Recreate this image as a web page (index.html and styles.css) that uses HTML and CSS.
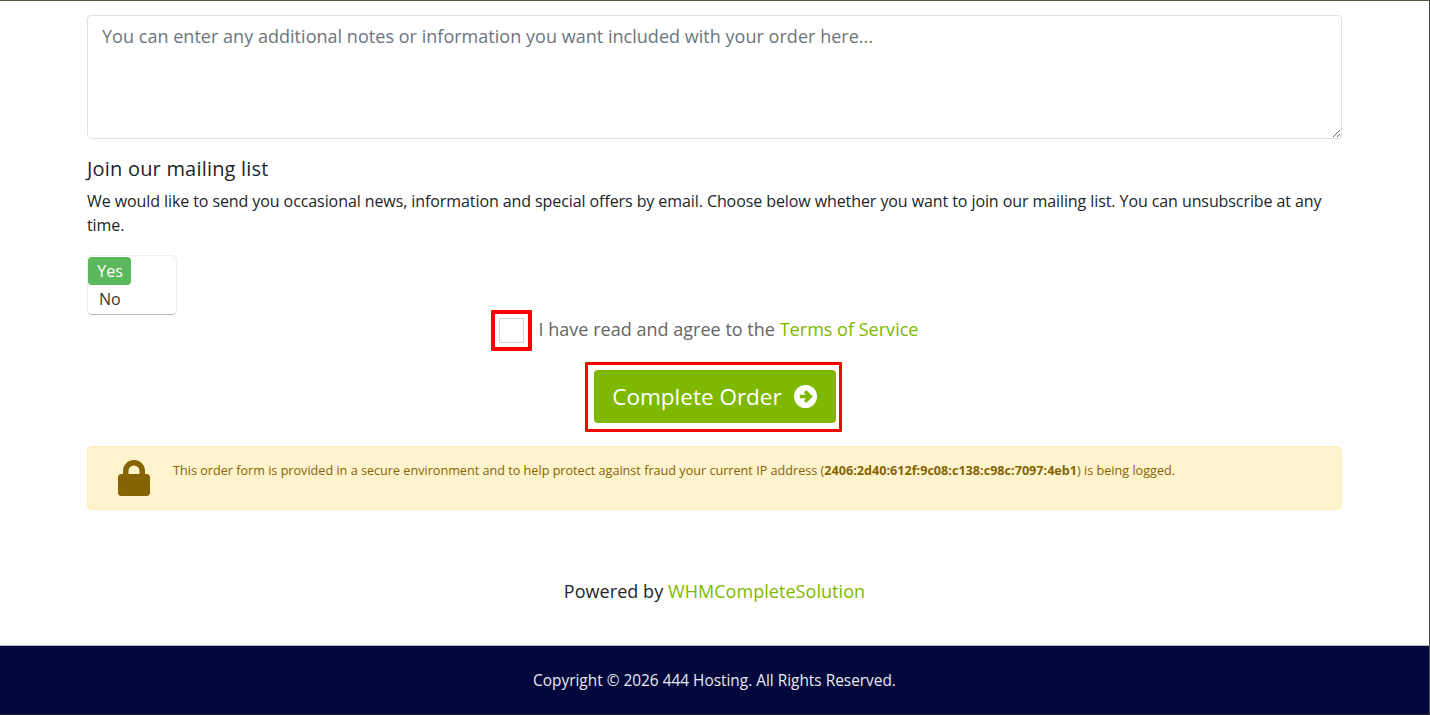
FILE: index.html
```html
<!DOCTYPE html>
<html lang="en">
<head>
    <meta charset="UTF-8">
    <meta name="viewport" content="width=device-width, initial-scale=1.0">
    <title>Checkout</title>
    <link rel="stylesheet" href="styles.css">
</head>
<body>
    <div class="frame">
        <main class="container">
            <textarea class="notes" placeholder="You can enter any additional notes or information you want included with your order here..."></textarea>

            <h3 class="list-title">Join our mailing list</h3>
            <p class="list-text">We would like to send you occasional news, information and special offers by email. Choose below whether you want to join our mailing list. You can unsubscribe at any time.</p>

            <div class="toggle">
                <span class="toggle-yes">Yes</span>
                <span class="toggle-no">No</span>
            </div>

            <div class="terms">
                <span class="highlight check-wrap"><span class="check"></span></span>
                <span class="terms-text">I have read and agree to the <a href="#">Terms of Service</a></span>
            </div>

            <div class="submit-row">
                <span class="highlight button-wrap">
                    <button class="complete" type="button">
                        <span class="complete-label">Complete Order</span>
                        <svg class="arrow" viewBox="0 0 24 24" width="23" height="23">
                            <circle cx="12" cy="12" r="12" fill="#fff"/>
                            <path d="M6 12h10.5M11.5 6.5l5.5 5.5-5.5 5.5" fill="none" stroke="#7fb800" stroke-width="3.6"/>
                        </svg>
                    </button>
                </span>
            </div>

            <div class="notice">
                <svg class="lock" viewBox="0 0 32 36" width="32" height="36">
                    <path d="M5 15V11a11 11 0 0 1 22 0v4h-5.500V11a5.500 5.500 0 0 0-11 0v4z" fill="#856404"/>
                    <rect x="0" y="14" width="32" height="22" rx="3.500" fill="#856404"/>
                </svg>
                <p>This order form is provided in a secure environment and to help protect against fraud your current IP address (<strong>2406:2d40:612f:9c08:c138:c98c:7097:4eb1</strong>) is being logged.</p>
            </div>

            <p class="powered">Powered by <a href="#">WHMCompleteSolution</a></p>
        </main>

        <footer class="footer">Copyright © 2026 444 Hosting. All Rights Reserved.</footer>
    </div>
</body>
</html>
```

FILE: styles.css
```css
* {
    box-sizing: border-box;
}
html, body {
    margin: 0;
    height: 100%;
    overflow: hidden;
}
body {
    font-family: "Open Sans", "Liberation Sans", sans-serif;
    font-size: 16px;
    line-height: 24px;
    color: #212529;
    background-color: #fff;
}
a {
    color: #7fb800;
    text-decoration: none;
}
.frame {
    height: 715px;
    display: flex;
    flex-direction: column;
    border-top: 1px solid #4a5a3c;
    border-right: 1px solid #4a4a4a;
    border-bottom: 1px solid #222;
}
.container {
    flex: 1;
    padding: 14px 87px 0 87px;
}
.notes {
    display: block;
    width: 100%;
    height: 124px;
    padding: 5px 14px;
    font-family: inherit;
    font-size: 18px;
    letter-spacing: 0.03px;
    line-height: 30px;
    border: 1px solid #dee2e6;
    border-radius: 4px;
    outline: none;
}
.notes::placeholder {
    color: #6c757d;
    opacity: 1;
}
.list-title {
    margin: 16px 0 6px;
    font-size: 20px;
    letter-spacing: 0.2px;
    font-weight: 400;
    line-height: 28px;
}
.list-text {
    margin: 0 0 18px;
    letter-spacing: -0.085px;
}
.toggle {
    width: 90px;
    height: 60px;
    padding: 1px;
    background-color: #fff;
    border: 1px solid #eee;
    border-bottom-color: #bbb;
    border-radius: 5px;
    display: flex;
    flex-direction: column;
    align-items: flex-start;
}
.toggle-yes {
    width: 43px;
    height: 28px;
    margin: 0 0 0 -1px;
    padding-left: 1px;
    line-height: 28px;
    text-align: center;
    color: #fff;
    background-color: #5cb85c;
    border-radius: 4px;
}
.toggle-no {
    height: 29px;
    padding-left: 10px;
    line-height: 29px;
    color: #333;
}
.highlight {
    display: inline-flex;
    border: 4px solid #f00;
    border-radius: 1px;
    align-items: center;
    justify-content: center;
}
.terms {
    display: flex;
    justify-content: center;
    align-items: center;
    gap: 7px;
    margin-top: -5px;
    padding-right: 20px;
    font-size: 18px;
    letter-spacing: 0.02px;
    color: #666;
}
.terms-text {
    margin-bottom: 4px;
}
.check-wrap {
    width: 41px;
    height: 41px;
}
.check {
    width: 25px;
    height: 25px;
    background-color: #fff;
    border: 1px solid #d4d4cc;
}
.submit-row {
    display: flex;
    justify-content: center;
    margin-top: 11px;
    padding-right: 2px;
}
.button-wrap {
    width: 257px;
    height: 70px;
    border-width: 3px;
    padding: 0 0 1px 2px;
}
.complete {
    display: flex;
    align-items: center;
    justify-content: center;
    gap: 12px;
    width: 242px;
    height: 53px;
    padding: 0;
    font-family: inherit;
    font-size: 22.500px;
    color: #fff;
    background-color: #7fb800;
    border: none;
    border-radius: 4px;
}
.complete-label {
    margin-bottom: 1px;
}
.notice {
    display: flex;
    align-items: flex-start;
    gap: 23px;
    height: 64px;
    margin-top: 14px;
    padding: 13px 30px;
    color: #856404;
    background-color: #fff3cd;
    border: 1px solid #ffeeba;
    border-radius: 5px;
    font-size: 12.630px;
    line-height: 20px;
}
.notice p {
    margin: 1px 0 0;
}
.lock {
    flex: none;
}
.powered {
    margin: 69px 0 0;
    text-align: center;
    font-size: 18px;
    letter-spacing: 0.05px;
}
.footer {
    height: 69px;
    border-top: 1px solid #b9b9c9;
    background-color: #03083c;
    color: #e8e8f0;
    font-size: 15.400px;
    line-height: 69px;
    text-align: center;
}
```
